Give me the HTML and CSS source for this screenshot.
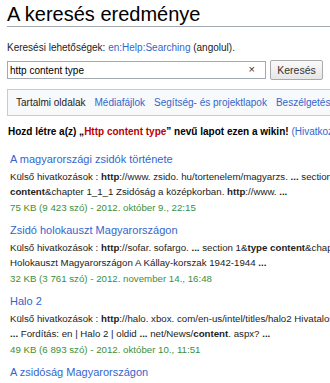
FILE: index.html
```html
<!DOCTYPE html>
<html lang="hu">
<head>
    <meta charset="UTF-8">
    <meta name="viewport" content="width=device-width, initial-scale=1.0">
    <title>A keresés eredménye</title>
    <link rel="stylesheet" href="styles.css">
</head>
<body>
    <div class="page">
        <h1 class="page-title">A keresés eredménye</h1>

        <div class="search-help">
            Keresési lehetőségek: <a href="#">en:Help:Searching</a> (angolul).
        </div>

        <form class="search-form">
            <div class="search-box">
                <input type="text" value="http content type">
                <span class="search-clear">×</span>
            </div>
            <button type="button" class="btn-search">Keresés</button>
        </form>

        <div class="search-tabs">
            <span class="tab-current">Tartalmi oldalak</span>
            <a href="#">Médiafájlok</a>
            <a href="#">Segítség- és projektlapok</a>
            <a href="#">Beszélgetések</a>
        </div>

        <p class="create-page">
            <b>Hozd létre a(z) „<a href="#" class="new-link">Http content type</a>” nevű lapot ezen a wikin!</b>
            <a href="#">(Hivatkozások keresése)</a>
        </p>

        <ul class="results">
            <li class="result">
                <div class="result-title"><a href="#">A magyarországi zsidók története</a></div>
                <div class="result-snippet">
                    Külső hivatkozások : <b>http</b>://www. zsido. hu/tortenelem/magyarzs. <b>...</b> section 1_1&amp;<b>type</b><br>
                    <b>content</b>&amp;chapter 1_1_1 Zsidóság a középkorban. <b>http</b>://www. <b>...</b>
                </div>
                <div class="result-meta">75 KB (9 423 szó) - 2012. október 9., 22:15</div>
            </li>
            <li class="result">
                <div class="result-title"><a href="#">Zsidó holokauszt Magyarországon</a></div>
                <div class="result-snippet">
                    Külső hivatkozások : <b>http</b>://sofar. sofargo. <b>...</b> section 1&amp;<b>type</b> <b>content</b>&amp;chapter 1_1<br>
                    Holokauszt Magyarországon A Kállay-korszak 1942-1944 <b>...</b>
                </div>
                <div class="result-meta">32 KB (3 761 szó) - 2012. november 14., 16:48</div>
            </li>
            <li class="result">
                <div class="result-title"><a href="#">Halo 2</a></div>
                <div class="result-snippet">
                    Külső hivatkozások : <b>http</b>://halo. xbox. com/en-us/intel/titles/halo2 Hivatalos oldal<br>
                    <b>...</b> Fordítás: en | Halo 2 | oldid <b>...</b> net/News/<b>content</b>. aspx? <b>...</b>
                </div>
                <div class="result-meta">49 KB (6 893 szó) - 2012. október 10., 11:51</div>
            </li>
            <li class="result">
                <div class="result-title"><a href="#">A zsidóság Magyarországon</a></div>
                <div class="result-snippet">
                    Külső hivatkozások : <b>http</b>://www. zsido. hu <b>...</b>
                </div>
            </li>
        </ul>
    </div>
</body>
</html>
```

FILE: styles.css
```css
body {
    margin: 0;
    background: #fff;
    color: #222;
    font-family: "Liberation Sans", Arial, sans-serif;
    font-size: 10px;
    overflow: hidden;
}

a {
    color: #3366cc;
    text-decoration: none;
}

.page {
    width: 440px;
    padding: 0 0 0 7px;
}

.page-title {
    margin: 3px 0 0 0;
    font-size: 20px;
    font-weight: normal;
    line-height: 23px;
    color: #000;
    border-bottom: 1px solid #a2a9b1;
}

.search-help {
    margin-top: 14px;
    line-height: 14px;
}

.search-form {
    display: flex;
    gap: 4px;
    margin: 6px 0 0 0;
}

.search-box {
    position: relative;
    width: 259px;
}

.search-box input {
    width: 100%;
    height: 18px;
    box-sizing: border-box;
    border: 1px solid #a2a9b1;
    padding: 0 16px 0 2px;
    font-family: inherit;
    font-size: 10px;
    color: #000;
}

.search-clear {
    position: absolute;
    right: 11px;
    top: 2px;
    font-size: 11px;
    color: #333;
}

.btn-search {
    width: 53px;
    height: 20px;
    margin-top: -1px;
    border: 1px solid #aaa;
    border-radius: 2px;
    background: linear-gradient(#fafafa, #e6e6e6);
    font-family: inherit;
    font-size: 10.5px;
    color: #333;
    padding: 0;
}

.search-tabs {
    display: flex;
    gap: 9px;
    margin-top: 9px;
    padding: 0 8px;
    height: 25px;
    align-items: center;
    background: #f8f9fa;
    border: 1px solid #c8ccd1;
    white-space: nowrap;
}

.tab-current {
    color: #222;
}

.create-page {
    margin: 9px 0 0 1px;
    line-height: 14px;
    white-space: nowrap;
    color: #000;
}

.new-link {
    color: #ba0000;
}

.results {
    list-style: none;
    margin: 12px 0 0 0;
    padding: 0 0 0 3px;
}

.result {
    margin-bottom: 7px;
}

.result-title {
    font-size: 11px;
    line-height: 16px;
    margin-bottom: 2px;
}

.result-snippet {
    font-size: 9.7px;
    line-height: 15px;
    white-space: nowrap;
    color: #222;
}

.result-meta {
    margin-top: 1px;
    font-size: 9.7px;
    line-height: 15px;
    color: #3b8f3b;
}
```
